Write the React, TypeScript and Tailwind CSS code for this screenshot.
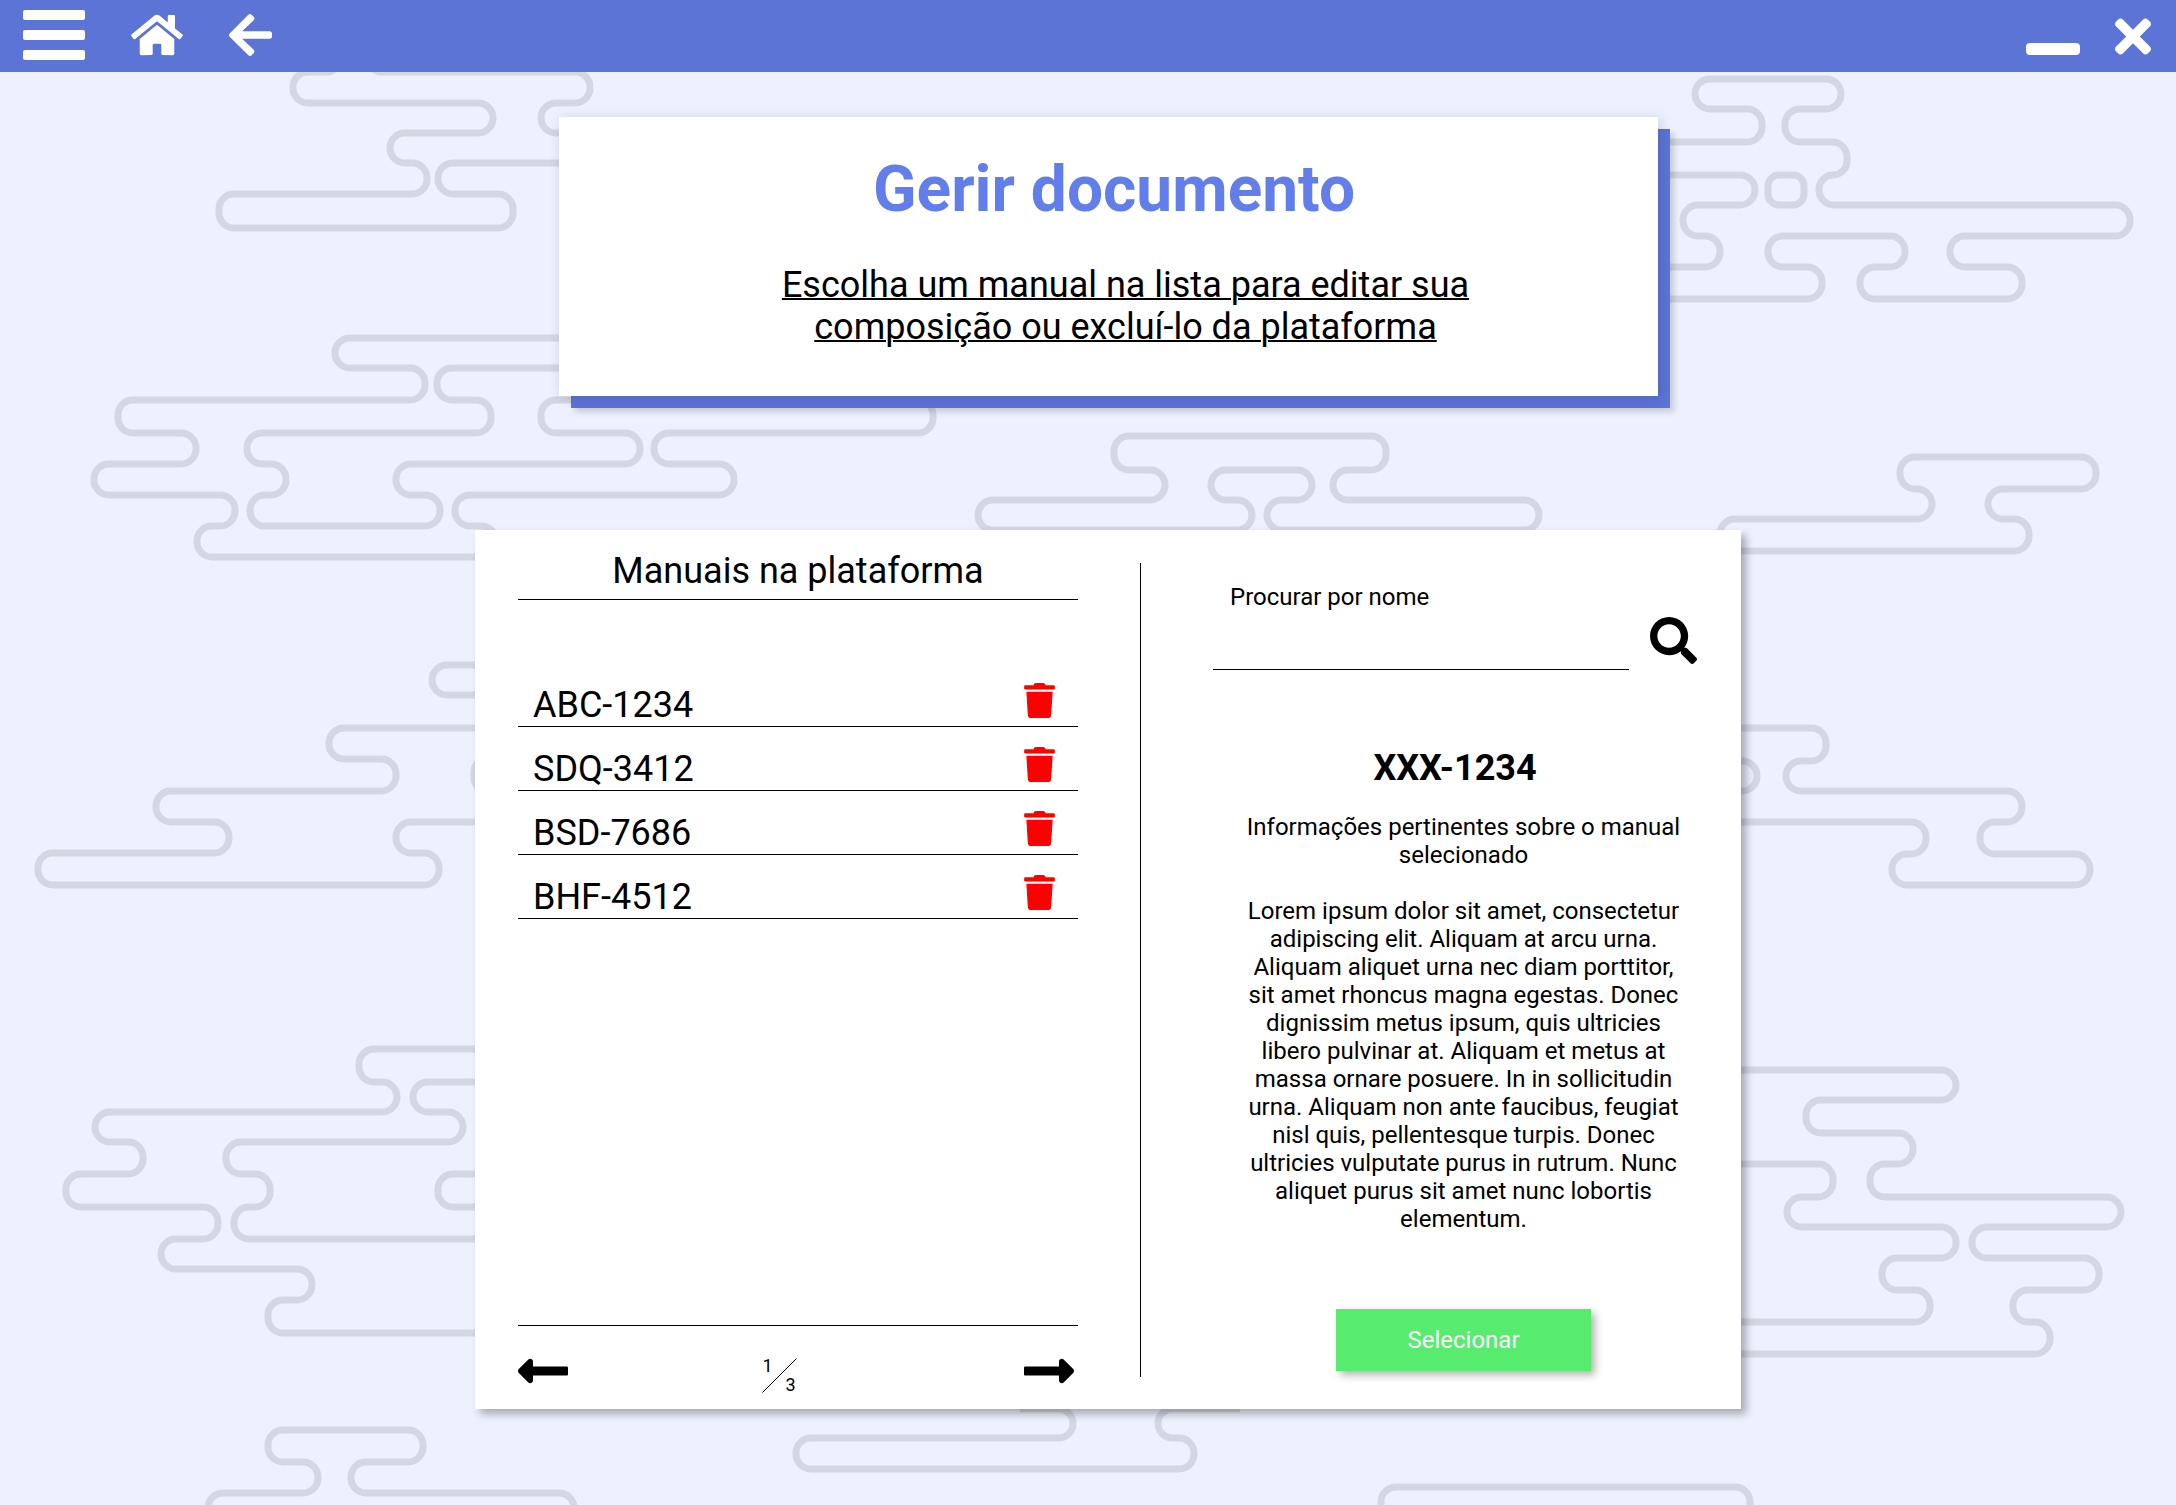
import { FaArrowLeft, FaHome, FaLongArrowAltLeft, FaLongArrowAltRight, FaSearch, FaTimes, FaTrash } from "react-icons/fa";

const MANUALS = ["ABC-1234", "SDQ-3412", "BSD-7686", "BHF-4512"];

// Cloud outlines: a start point, then alternating x and y targets.
const CLOUDS: number[][] = [
  [640, 133, 541, 103, 590, 72, 370, 50],
  [338, 50, 338, 72, 293, 103, 493, 133, 390, 163, 427, 194, 219, 228, 513, 194, 438, 163, 620],
  [1600, 142, 1762, 109, 1695, 79, 1841, 109, 1785, 142, 1847, 175, 1819, 205, 2130, 236, 1950, 267, 2022, 299, 1860, 267, 1905, 236, 1768, 267, 1822, 299, 1600],
  [1600, 175, 1755, 205, 1683, 236, 1720, 267, 1600],
  [600, 338, 335, 368, 425, 400, 118, 433, 196, 464, 94, 495, 235, 526, 197, 557, 520],
  [620, 368, 437, 400, 491, 433, 247, 464, 286, 495, 250, 526, 440, 495, 396, 464, 640, 433, 541, 400, 620],
  [880, 400, 933, 433, 654, 464, 734, 495, 455, 526, 496, 557],
  [1250, 436, 1386, 470, 1333, 500, 1539, 530, 1267, 500, 1312, 470, 1211, 500, 1252, 530, 978, 500, 1165, 470, 1114, 436, 1251],
  [1720, 560, 1720, 519, 1932, 489, 1900, 457, 2096, 489, 1988, 519, 2029, 551, 1700],
  [500, 728, 329, 759, 396, 791, 156, 822, 229, 853, 38, 885, 439, 853, 396, 822, 500],
  [500, 665, 432, 695, 500],
  [500, 759, 474, 791, 500],
  [1700, 728, 1826, 761, 1786, 791, 2022, 822, 1980, 854, 2090, 885, 1892, 854, 1926, 822, 1700],
  [1700, 761, 1757, 791, 1700],
  [500, 1049, 359, 1082, 397, 1112, 95, 1142, 143, 1174, 66, 1207, 218, 1239, 161, 1269, 312, 1300, 268, 1333, 500],
  [500, 1082, 413, 1112, 463, 1142, 226, 1174, 270, 1207, 234, 1239, 500],
  [500, 1174, 438, 1207, 500],
  [208, 1540, 208, 1493, 318, 1462, 268, 1430, 423, 1462, 351, 1493, 574, 1540],
  [1700, 1070, 1956, 1100, 1806, 1133, 1913, 1164, 1870, 1197, 2121, 1227, 1972, 1258, 2099, 1290, 2013, 1322, 2050, 1354, 1700],
  [1700, 1164, 1833, 1197, 1787, 1227, 1956, 1258, 1882, 1290, 1930, 1322, 1700],
  [1381, 1540, 1381, 1487, 1750, 1540],
  [1020, 1409, 1073, 1438, 796, 1469, 1194, 1438, 1158, 1409, 1240],
];

function cloudPath(v: number[]): string {
  const pts: [number, number][] = [[v[0], v[1]]];
  let [x, y] = pts[0];
  for (let i = 2; i < v.length; i++) {
    const nx = i % 2 === 0 ? v[i] : x;
    const ny = i % 2 === 0 ? y : v[i];
    if (nx !== x || ny !== y) pts.push([nx, ny]);
    x = nx;
    y = ny;
  }
  let d = `M${pts[0][0]} ${pts[0][1]}`;
  for (let i = 1; i < pts.length - 1; i++) {
    const [px, py] = pts[i - 1];
    const [cx, cy] = pts[i];
    const [qx, qy] = pts[i + 1];
    const before = Math.abs(cx - px) + Math.abs(cy - py);
    const after = Math.abs(qx - cx) + Math.abs(qy - cy);
    const r = Math.min(15, before / 2, after / 2);
    const ax = cx - Math.sign(cx - px) * r;
    const ay = cy - Math.sign(cy - py) * r;
    const bx = cx + Math.sign(qx - cx) * r;
    const by = cy + Math.sign(qy - cy) * r;
    const turn = (cx - px) * (qy - cy) - (cy - py) * (qx - cx);
    d += `L${ax} ${ay}A${r} ${r} 0 0 ${turn > 0 ? 1 : 0} ${bx} ${by}`;
  }
  const last = pts[pts.length - 1];
  return `${d}L${last[0]} ${last[1]}`;
}

function CloudBackground() {
  return (
    <svg
      aria-hidden="true"
      className="absolute inset-0 h-full w-full"
      viewBox="0 0 2176 1505"
      preserveAspectRatio="xMidYMin slice"
      fill="none"
      stroke="#d3d7e2"
      strokeWidth="7"
    >
      {CLOUDS.map((c, i) => (
        <path key={i} d={cloudPath(c)} />
      ))}
      <rect x="1768" y="175" width="36" height="30" rx="11" />
    </svg>
  );
}

function TopBar() {
  return (
    <header className="relative flex h-[72px] items-center justify-between bg-[#5d74d7] pr-[25px] pl-[23px] text-white">
      <nav className="flex items-center gap-[46px] pb-0.5">
        <button type="button" aria-label="Menu" className="flex w-[62px] flex-col gap-2.5">
          <span className="h-2.5 rounded-xs bg-white" />
          <span className="h-2.5 rounded-xs bg-white" />
          <span className="h-2.5 rounded-xs bg-white" />
        </button>
        <button type="button" aria-label="Início">
          <FaHome className="h-[46px] w-[52px]" />
        </button>
        <button type="button" aria-label="Voltar">
          <FaArrowLeft className="h-[50px] w-[43px]" />
        </button>
      </nav>
      <div className="flex items-center gap-[35px]">
        <button type="button" aria-label="Minimizar" className="flex h-[38px] w-[54px] items-end">
          <span className="h-3 w-full rounded-sm bg-white" />
        </button>
        <button type="button" aria-label="Fechar">
          <FaTimes className="h-[53px] w-9" />
        </button>
      </div>
    </header>
  );
}

function ManualList() {
  return (
    <section className="flex flex-1 flex-col pt-5 pr-[62px] pl-[43px]">
      <h2 className="border-b border-black pb-[7px] text-center text-[36px] leading-[42px]">Manuais na plataforma</h2>
      <ul className="mt-[63px] flex-1">
        {MANUALS.map((name) => (
          <li key={name} className="flex h-16 items-end justify-between border-b border-black pr-[23px] pl-[15px]">
            <span className="text-[36px] leading-[42px]">{name}</span>
            <button type="button" aria-label={`Excluir ${name}`} className="pb-2">
              <FaTrash className="h-[35px] w-[31px] text-[#ff0000]" />
            </button>
          </li>
        ))}
      </ul>
      <footer className="flex items-start border-t border-black pt-8 pr-1 pb-4">
        <button type="button" aria-label="Página anterior">
          <FaLongArrowAltLeft className="h-[26px] w-[50px]" viewBox="0 140 448 232" />
        </button>
        <div className="flex flex-1 justify-center pr-[34px]">
          <div className="relative flex h-[35px] w-[35px] flex-col justify-between px-px text-[18px] leading-[16px]">
            <span>1</span>
            <svg aria-hidden="true" className="absolute inset-0 h-full w-full" viewBox="0 0 35 35">
              <path d="M0.5 34.5L34.5 0.5" stroke="#000" />
            </svg>
            <span className="text-right">3</span>
          </div>
        </div>
        <button type="button" aria-label="Próxima página">
          <FaLongArrowAltRight className="h-[26px] w-[50px]" viewBox="0 140 448 232" />
        </button>
      </footer>
    </section>
  );
}

function ManualDetails() {
  return (
    <section className="flex w-[600px] flex-col pt-[53px] pr-11 pb-[38px] pl-[72px] text-[24px] leading-[28px]">
      <form className="flex items-end gap-[21px]">
        <div className="flex flex-1 flex-col">
          <label htmlFor="search" className="pl-[17px]">
            Procurar por nome
          </label>
          <input id="search" type="text" className="h-[59px] w-full border-b border-black px-[17px] outline-none" />
        </div>
        <button type="button" aria-label="Procurar" className="pb-1.5">
          <FaSearch className="h-[47px] w-[47px]" />
        </button>
      </form>
      <h3 className="mt-[77px] text-center text-[36px] leading-[42px] font-bold">XXX-1234</h3>
      <div className="mt-6 flex flex-1 flex-col items-center pl-[17px] text-center">
        <p className="max-w-[440px]">Informações pertinentes sobre o manual selecionado</p>
        <p className="mt-7 max-w-[440px]">
          Lorem ipsum dolor sit amet, consectetur adipiscing elit. Aliquam at arcu urna. Aliquam aliquet urna nec diam
          porttitor, sit amet rhoncus magna egestas. Donec dignissim metus ipsum, quis ultricies libero pulvinar at.
          Aliquam et metus at massa ornare posuere. In in sollicitudin urna. Aliquam non ante faucibus, feugiat nisl
          quis, pellentesque turpis. Donec ultricies vulputate purus in rutrum. Nunc aliquet purus sit amet nunc
          lobortis elementum.
        </p>
        <button
          type="button"
          className="mt-auto h-[62px] w-[255px] bg-[#57ec6d] text-white shadow-[4px_4px_8px_rgba(0,0,0,0.3)]"
        >
          Selecionar
        </button>
      </div>
    </section>
  );
}

export default function App() {
  return (
    <div className="relative min-h-screen overflow-hidden bg-[#edf1fd] font-['Roboto',sans-serif] text-black">
      <CloudBackground />
      <TopBar />
      <main className="relative flex flex-col items-center pt-[45px] pb-20 pl-10">
        <section className="flex w-full max-w-[1099px] flex-col items-center bg-white pt-[35px] pb-12 text-center shadow-[2px_2px_12px_rgba(0,0,0,0.15),12px_12px_0_#5d74d7,16px_16px_6px_rgba(0,0,0,0.16)]">
          <h1 className="pl-3 text-[64px] leading-[75px] font-bold text-[#627eea]">Gerir documento</h1>
          <div className="mt-[37px] pl-[35px]">
            <p className="max-w-[730px] text-[36px] leading-[42px] underline decoration-2">
              Escolha um manual na lista para editar sua composição ou excluí-lo da plataforma
            </p>
          </div>
        </section>
        <div className="mt-[134px] flex min-h-[879px] w-full max-w-[1266px] bg-white shadow-[5px_5px_8px_rgba(0,0,0,0.3)]">
          <ManualList />
          <div className="mt-[33px] mb-8 w-px bg-black" />
          <ManualDetails />
        </div>
      </main>
    </div>
  );
}
